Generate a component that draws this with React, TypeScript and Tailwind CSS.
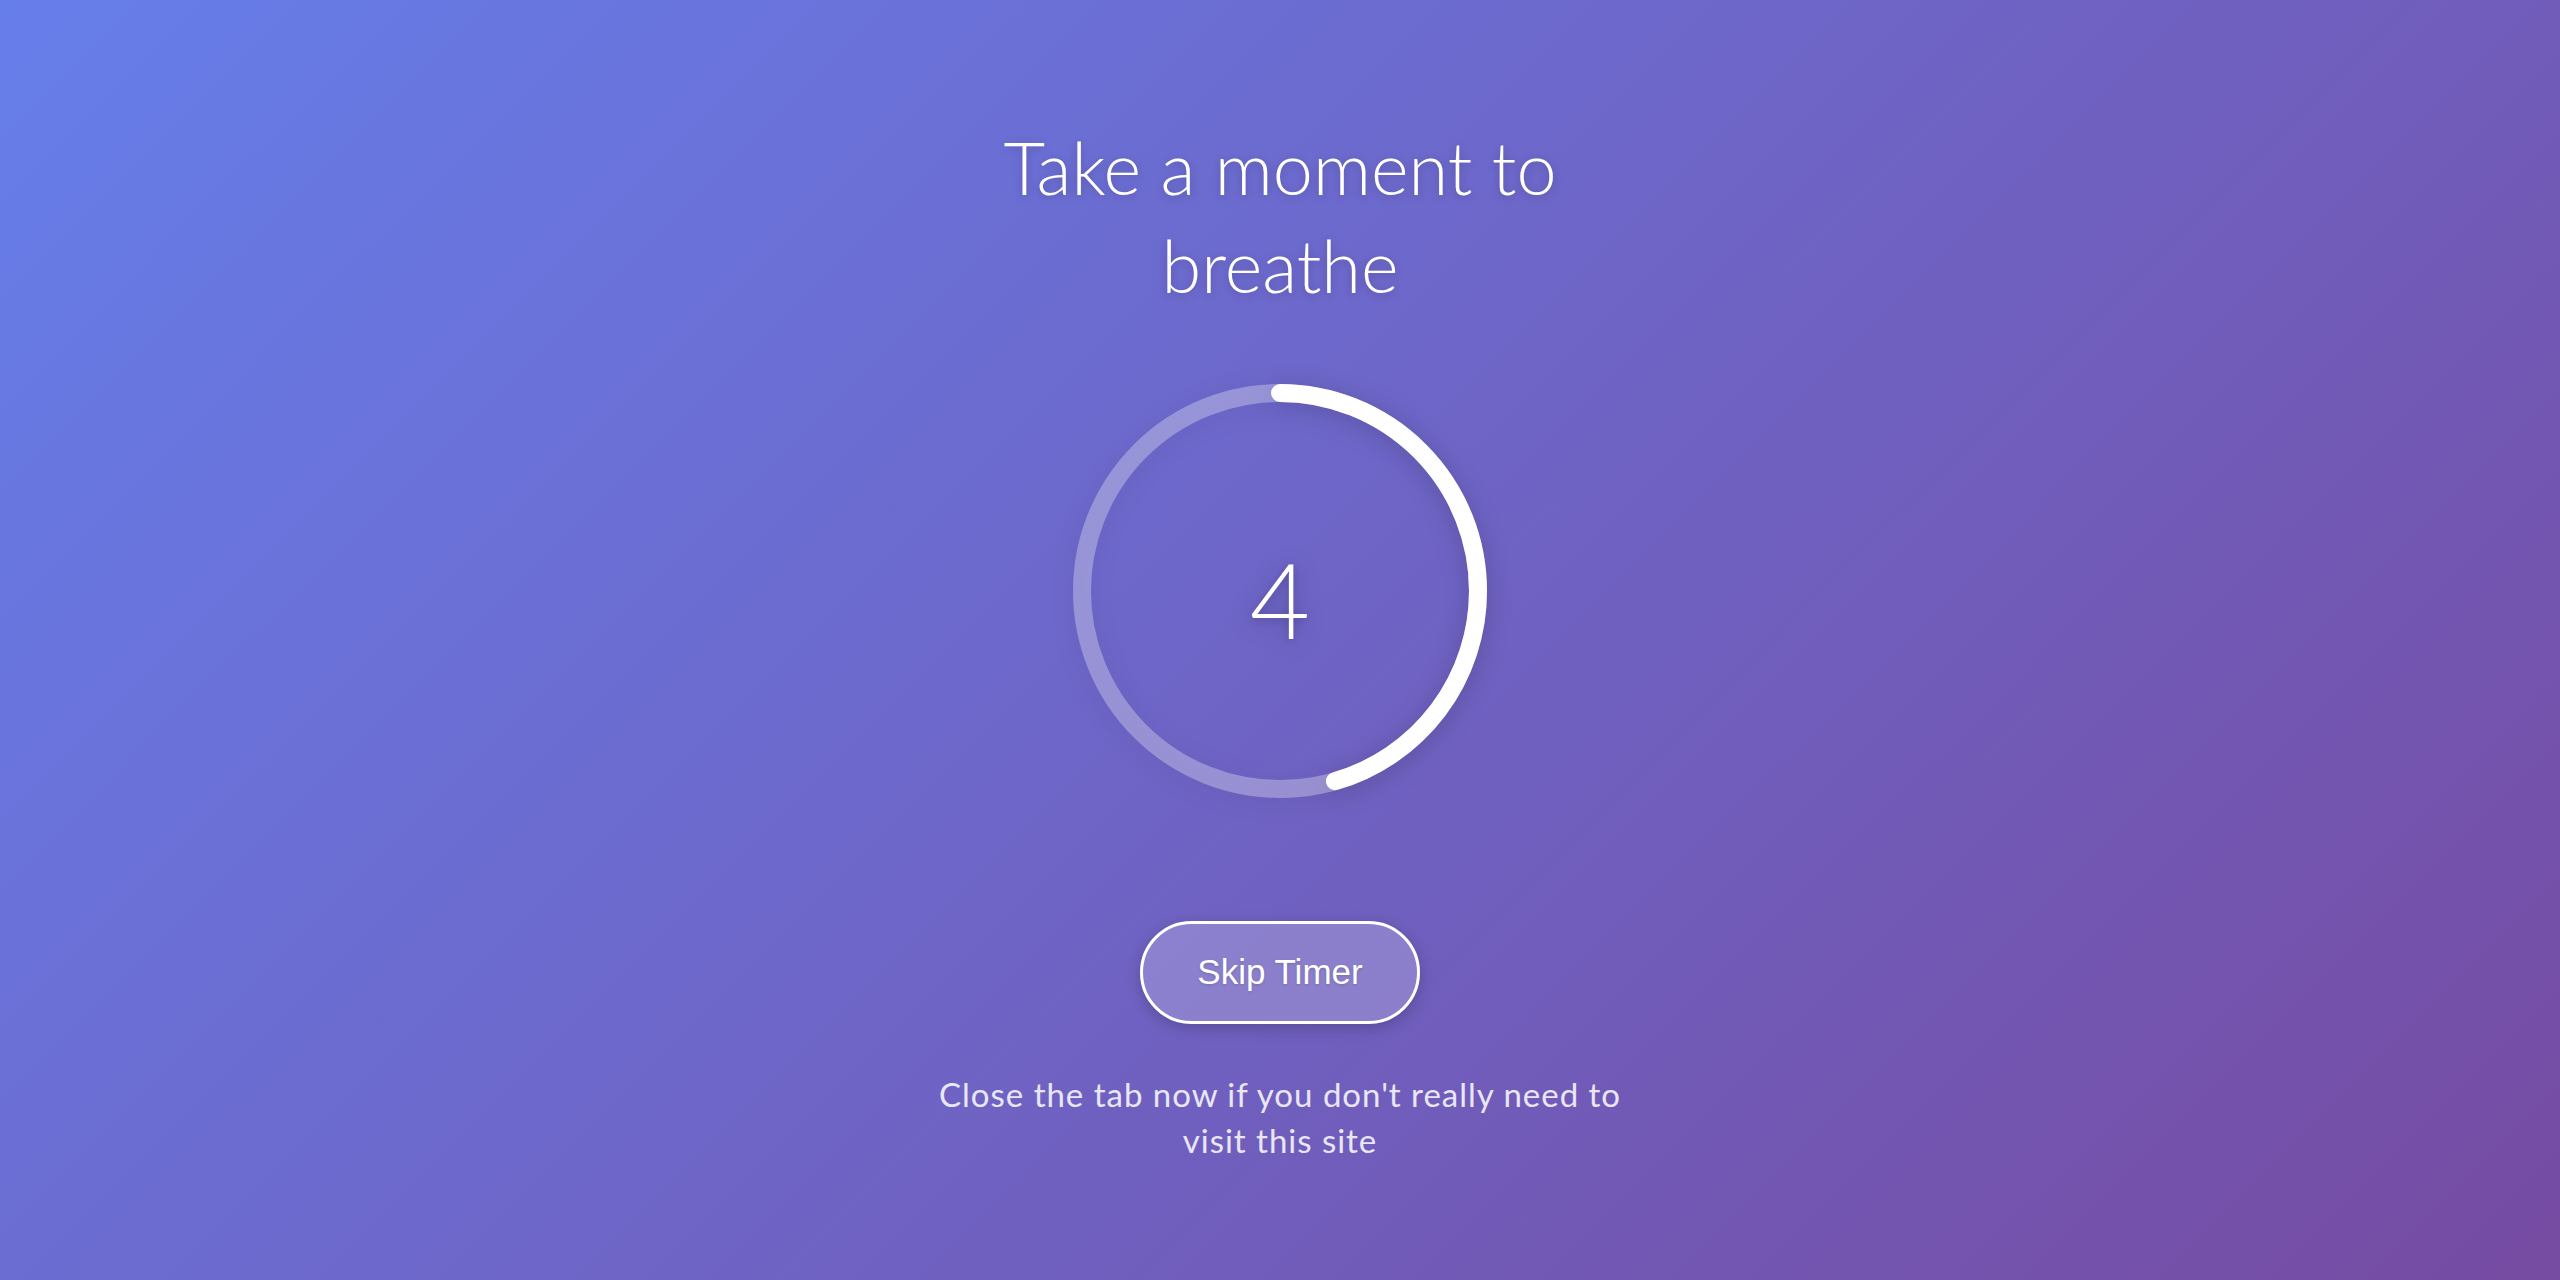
import React from "react";

export default function App() {
  const r = 198;
  const c = 2 * Math.PI * r;
  const frac = 0.455;
  return (
    <div className="min-h-screen w-full flex flex-col items-center justify-center bg-[linear-gradient(135deg,#667eea_0%,#764ba2_100%)] text-white">
      <h1 className="w-[760px] text-center text-[72px] leading-[98px] font-light font-['Lato',sans-serif] [text-shadow:0_2px_10px_rgba(0,0,0,0.2)]">
        Take a moment to breathe
      </h1>
      <div className="relative mt-[70px] w-[414px] h-[414px] [filter:drop-shadow(0_4px_12px_rgba(0,0,0,0.18))]">
        <svg width="414" height="414" viewBox="0 0 414 414" className="absolute inset-0 -rotate-90">
          <circle cx="207" cy="207" r={r} fill="none" stroke="rgba(255,255,255,0.3)" strokeWidth="18" />
          <circle
            cx="207"
            cy="207"
            r={r}
            fill="none"
            stroke="#ffffff"
            strokeWidth="18"
            strokeLinecap="round"
            strokeDasharray={`${c * frac} ${c}`}
          />
        </svg>
        <div className="absolute inset-0 flex items-center justify-center pt-[16px] text-[104px] leading-none font-light font-['Lato',sans-serif] [text-shadow:0_2px_10px_rgba(0,0,0,0.2)]">
          4
        </div>
      </div>
      <button className="mt-[123px] w-[280px] h-[103px] rounded-full border-[3px] border-white bg-white/20 text-[35px] font-['Liberation_Sans',Arial,sans-serif] text-white shadow-[0_4px_15px_rgba(0,0,0,0.2)] [text-shadow:0_1px_3px_rgba(0,0,0,0.15)]">
        Skip Timer
      </button>
      <p className="mt-[47px] w-[700px] text-center text-[33px] tracking-[0.03em] leading-[46px] text-white/85 font-['Lato',sans-serif]">
        Close the tab now if you don't really need to visit this site
      </p>
    </div>
  );
}
